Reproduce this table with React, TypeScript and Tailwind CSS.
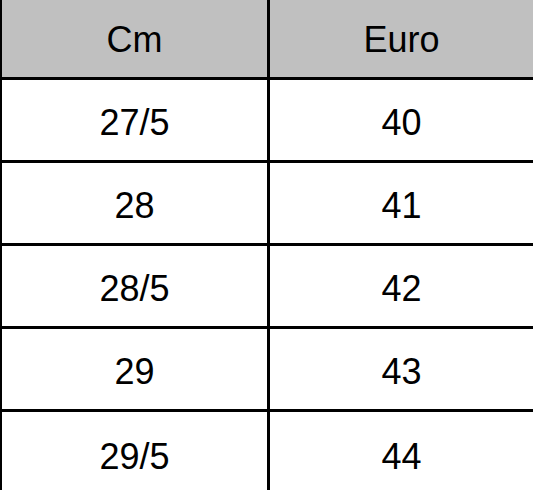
import React from "react";

const rows: [string, string][] = [
  ["27/5", "40"],
  ["28", "41"],
  ["28/5", "42"],
  ["29", "43"],
  ["29/5", "44"],
];

export default function App() {
  return (
    <div
      className="w-[533px] h-[490px] overflow-hidden bg-white border-l-2 border-black text-black"
      style={{ fontFamily: '"Liberation Sans", Arial, sans-serif' }}
    >
      <div className="flex h-[80px] bg-[#c0c0c0] border-b-[3px] border-black text-[36px]">
        <div className="w-[268px] shrink-0 border-r-[3px] border-black flex items-center justify-center pt-[3px]">
          Cm
        </div>
        <div className="flex-1 flex items-center justify-center pt-[3px]">Euro</div>
      </div>
      {rows.map(([cm, eu], i) => (
        <div
          key={i}
          className={
            i < rows.length - 1
              ? "flex h-[83px] border-b-[3px] border-black text-[36px]"
              : "flex h-[83px] text-[36px]"
          }
        >
          <div className="w-[268px] shrink-0 border-r-[3px] border-black flex items-center justify-center pt-[6px]">
            {cm}
          </div>
          <div className="flex-1 flex items-center justify-center pt-[6px]">{eu}</div>
        </div>
      ))}
    </div>
  );
}
